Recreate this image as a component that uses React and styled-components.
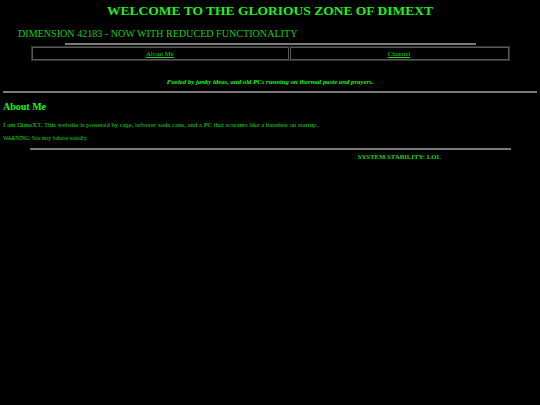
import styled, { createGlobalStyle } from "styled-components";

const GlobalStyle = createGlobalStyle`
  html, body {
    background: #000;
  }
  body {
    margin: 0;
    padding: 3px;
    color: #1fd41f;
    font-family: "Liberation Serif", "Times New Roman", serif;
  }
`;

const Title = styled.h1`
  margin: 0;
  text-align: center;
  font-size: 13.5px;
  line-height: 16px;
  font-weight: bold;
  color: #1ff01f;
`;

const Subtitle = styled.div`
  margin-top: 8px;
  padding-left: 15px;
  font-size: 10.1px;
  line-height: 13px;
  color: #1fc81f;
`;

const Rule = styled.div`
  height: 2px;
  margin: ${(p) => p.$top || 0}px auto 0;
  width: ${(p) => p.$width || "100%"};
  background: #7a7a7a;
`;

const Nav = styled.nav`
  display: grid;
  grid-template-columns: 257fr 219fr;
  gap: 1px;
  width: 479px;
  margin: 1px auto 0;
  box-sizing: border-box;
  border: 1px solid #333;
`;

const NavCell = styled.div`
  height: 13px;
  border: 1px solid #585858;
  box-sizing: border-box;
  display: flex;
  align-items: center;
  justify-content: center;
`;

const NavLink = styled.a`
  font-size: 6.8px;
  line-height: 9px;
  color: #1fd41f;
  text-decoration: underline;
`;

const Tagline = styled.p`
  margin: 17px 0 0;
  text-align: center;
  font-size: 6.75px;
  line-height: 8px;
  font-weight: bold;
  font-style: italic;
  color: #1ff01f;
`;

const SectionTitle = styled.h2`
  margin: 8px 0 0;
  font-size: 10px;
  line-height: 12px;
  font-weight: bold;
  color: #1ff01f;
`;

const Text = styled.p`
  margin: ${(p) => p.$top}px 0 0;
  font-size: ${(p) => p.$size}px;
  line-height: ${(p) => p.$line}px;
`;

const Footer = styled.div`
  display: grid;
  grid-template-columns: 257fr 219fr;
  width: 479px;
  margin: 3px auto 0;
`;

const Stability = styled.div`
  grid-column: 2;
  text-align: center;
  font-size: 6.75px;
  line-height: 8px;
  font-weight: bold;
  color: #1fd41f;
`;

export default function App() {
  return (
    <>
      <GlobalStyle />
      <Title>WELCOME TO THE GLORIOUS ZONE OF DIMEXT</Title>
      <Subtitle>DIMENSION 42183 - NOW WITH REDUCED FUNCTIONALITY</Subtitle>
      <Rule $top={3} $width="411px" />
      <Nav>
        <NavCell>
          <NavLink href="#about">About Me</NavLink>
        </NavCell>
        <NavCell>
          <NavLink href="#channel">Channel</NavLink>
        </NavCell>
      </Nav>
      <Tagline>Fueled by janky ideas, and old PCs running on thermal paste and prayers.</Tagline>
      <Rule $top={5} />
      <SectionTitle id="about">About Me</SectionTitle>
      <Text $top={7} $size={6.8} $line={9}>
        I am DimeXT. This website is powered by rage, leftover soda cans, and a PC that screams like a banshee on startup.
      </Text>
      <Text $top={5.5} $size={5.5} $line={7}>
        WARNING: Site may behave weirdly.
      </Text>
      <Rule $top={6} $width="481px" />
      <Footer>
        <Stability>SYSTEM STABILITY: LOL</Stability>
      </Footer>
    </>
  );
}
